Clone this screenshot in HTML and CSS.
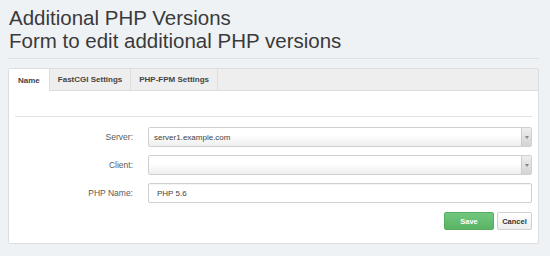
FILE: index.html
```html
<!DOCTYPE html>
<html lang="en">
<head>
    <meta charset="UTF-8">
    <title>Additional PHP Versions</title>
    <link rel="stylesheet" href="styles.css">
</head>
<body>
    <div class="page">
        <div class="page-title">
            <h1>Additional PHP Versions</h1>
            <h2>Form to edit additional PHP versions</h2>
        </div>
        <hr class="title-rule">

        <div class="panel">
            <div class="tabs">
                <a href="#" class="tab active">Name</a>
                <a href="#" class="tab">FastCGI Settings</a>
                <a href="#" class="tab">PHP-FPM Settings</a>
            </div>
            <div class="panel-body">
                <hr class="legend-rule">
                <div class="form">
                    <label class="label">Server:</label>
                    <div class="select">
                        <span class="select-value">server1.example.com</span>
                        <span class="select-arrow"></span>
                    </div>

                    <label class="label">Client:</label>
                    <div class="select">
                        <span class="select-value"></span>
                        <span class="select-arrow"></span>
                    </div>

                    <label class="label">PHP Name:</label>
                    <input type="text" class="input" value="PHP 5.6">
                </div>
                <div class="buttons">
                    <button class="btn btn-save">Save</button>
                    <button class="btn btn-cancel">Cancel</button>
                </div>
            </div>
        </div>
    </div>
</body>
</html>
```

FILE: styles.css
```css
body {
    margin: 0;
    padding: 0;
    background: #eff2f5;
    font-family: "Liberation Sans", Arial, sans-serif;
    color: #333;
}
.page {
    padding: 6px 11px 0 8px;
}
.page-title h1,
.page-title h2 {
    margin: 0;
    font-size: 20.5px;
    line-height: 23px;
    font-weight: normal;
    color: #3a3a3a;
    padding-left: 1px;
}
.title-rule {
    margin: 6px 0 9px;
    border: none;
    border-top: 1px solid #dde1e5;
}
.panel {
    background: #fff;
    border: 1px solid #dcdfe2;
    border-radius: 2px;
    padding-bottom: 13px;
}
.tabs {
    display: flex;
    height: 21px;
    background: #eeeeee;
    border-bottom: 1px solid #dddddd;
}
.tab {
    display: flex;
    align-items: center;
    padding: 0 8px;
    font-size: 8px;
    font-weight: bold;
    color: #444;
    text-decoration: none;
    border-right: 1px solid #dddddd;
}
.tab.active {
    background: #fff;
    height: 22px;
    padding: 0 9px;
}
.panel-body {
    padding: 0 6px;
}
.legend-rule {
    margin: 25px 0 10px;
    border: none;
    border-top: 1px solid #e2e2e2;
}
.form {
    display: grid;
    grid-template-columns: 118px 1fr;
    column-gap: 15px;
    row-gap: 8px;
    align-items: center;
}
.label {
    text-align: right;
    font-size: 8.5px;
    color: #5a5a5a;
}
.select {
    display: flex;
    height: 20px;
    border: 1px solid #d0d0d0;
    border-radius: 2px;
    background: linear-gradient(#ffffff 40%, #eeeeee);
    box-sizing: border-box;
}
.select-value {
    flex: 1;
    display: flex;
    align-items: center;
    padding-left: 5px;
    font-size: 8px;
    color: #444;
}
.select-arrow {
    width: 9px;
    border-left: 1px solid #cccccc;
    background: linear-gradient(#eeeeee, #d4d4d4);
    display: flex;
    align-items: center;
    justify-content: center;
}
.select-arrow::after {
    content: "";
    border-left: 2px solid transparent;
    border-right: 2px solid transparent;
    border-top: 3px solid #888;
}
.input {
    height: 20px;
    box-sizing: border-box;
    margin: 0;
    border: 1px solid #d0d0d0;
    border-radius: 2px;
    padding: 0 8px;
    font-family: "Liberation Sans", Arial, sans-serif;
    font-size: 8px;
    color: #444;
    box-shadow: inset 0 1px 1px rgba(0, 0, 0, 0.05);
}
.buttons {
    display: flex;
    justify-content: flex-end;
    gap: 3px;
    margin-top: 9px;
}
.btn {
    height: 18px;
    padding: 0;
    border-radius: 2px;
    font-family: "Liberation Sans", Arial, sans-serif;
    font-size: 7.5px;
    font-weight: bold;
    cursor: pointer;
}
.btn-save {
    width: 50px;
    color: #fff;
    background: linear-gradient(#72c77d, #5bb466);
    border: 1px solid #55ad5f;
}
.btn-cancel {
    width: 35px;
    color: #333;
    background: linear-gradient(#ffffff, #eeeeee);
    border: 1px solid #d0d0d0;
}
```
